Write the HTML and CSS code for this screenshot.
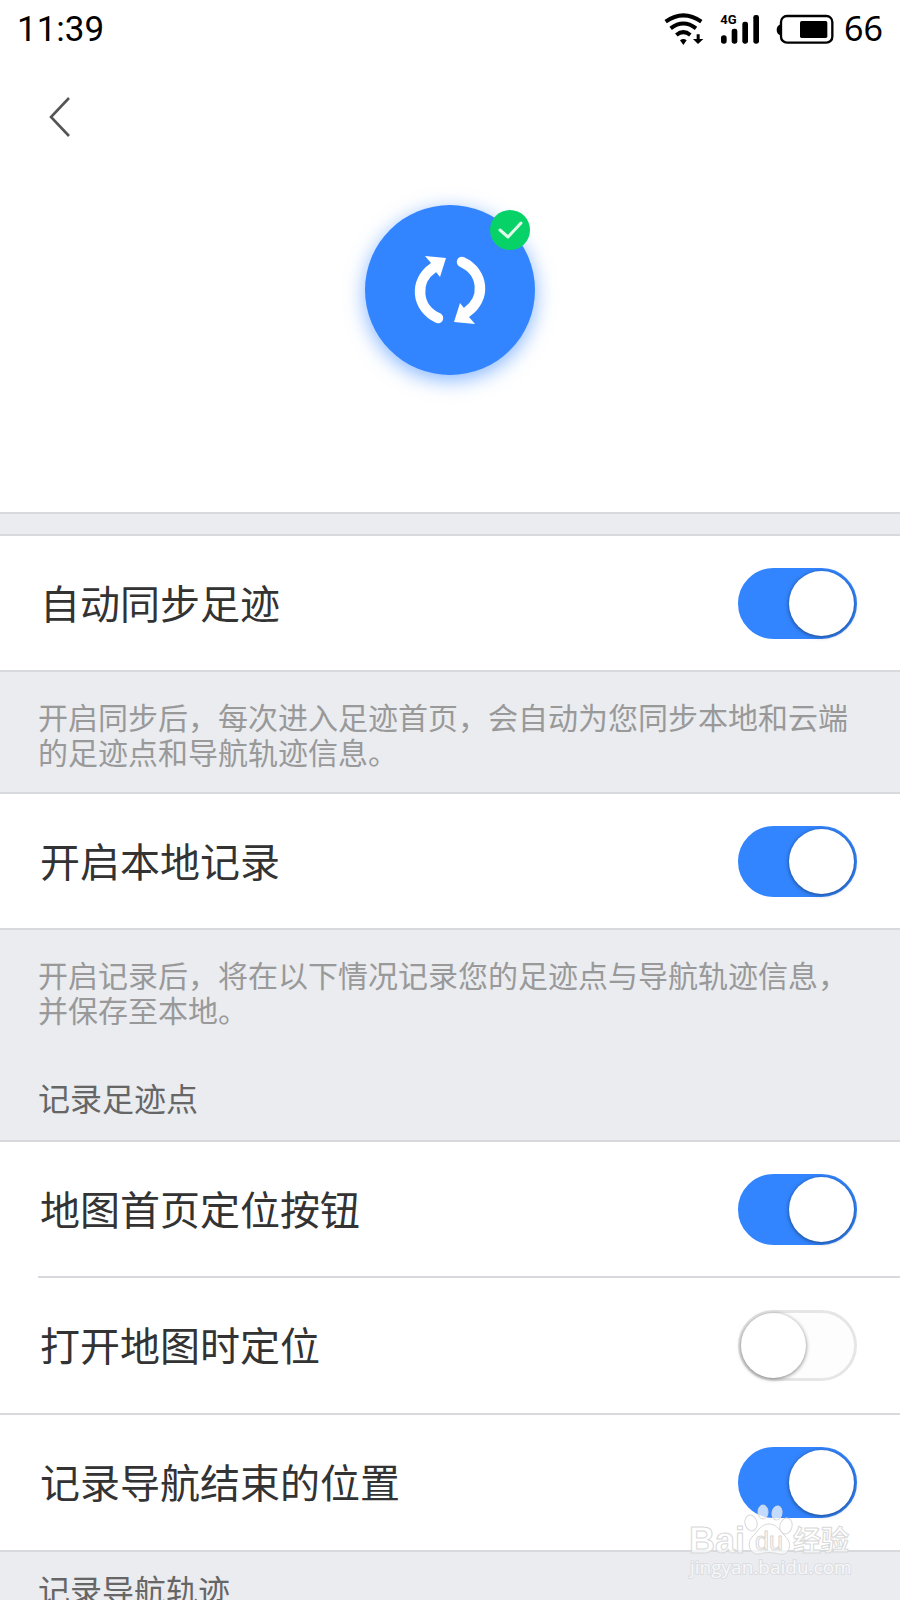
FILE: index.html
```html
<!DOCTYPE html>
<html lang="zh-CN">
<head>
    <meta charset="UTF-8">
    <meta name="viewport" content="width=device-width, initial-scale=1.0">
    <title>足迹设置</title>
    <link rel="stylesheet" href="styles.css">
</head>
<body>
    <!-- Status bar -->
    <div class="status-bar">
        <span class="time">11:39</span>
        <div class="status-icons">
            <svg width="40" height="33" viewBox="69 30 120 99">
                <g fill="none" stroke="#000" stroke-width="12">
                    <path d="M74 59Q127 21 181 59"/>
                    <path d="M89 79Q127 50 165 79"/>
                    <path d="M106 99Q127 82 148 99"/>
                </g>
                <path d="M117 115Q127 107 137 115L127 129Z"/>
                <path d="M167 97h9v14h11L171 126 156 111h11Z"/>
            </svg>
            <svg width="40" height="33" viewBox="240 30 120 99">
                <text class="network" x="241" y="67">4G</text>
                <rect x="243" y="100" width="17" height="25" rx="8"/>
                <rect x="275" y="80" width="17" height="45" rx="7"/>
                <rect x="307" y="59" width="17" height="66" rx="7"/>
                <rect x="340" y="39" width="17" height="86" rx="7"/>
            </svg>
            <div class="battery">
                <svg width="58" height="33" viewBox="408 30 174 99">
                    <rect x="423" y="42" width="154" height="80" rx="18" fill="none" stroke="#000" stroke-width="7"/>
                    <path d="M421 67Q410 72 410 84T421 100Z"/>
                    <rect x="480" y="57" width="82" height="51" rx="5"/>
                </svg>
                <span>66</span>
            </div>
        </div>
    </div>

    <!-- Back button -->
    <header class="nav">
        <button type="button" class="back" aria-label="返回">
            <svg width="22" height="40" viewBox="0 0 22 40">
                <path d="M20 1L2 20L20 39" fill="none" stroke="#555" stroke-width="2.6"/>
            </svg>
        </button>
    </header>

    <!-- Sync state -->
    <section class="sync">
        <button type="button" class="sync-button" aria-label="同步">
            <svg width="170" height="170" viewBox="0 0 170 170">
                <g id="arrow" fill="#fff">
                    <path d="M73 113C51 103 49 76 68 63" fill="none" stroke="#fff" stroke-width="10.5" stroke-linecap="round"/>
                    <path d="M60 51L81 53L75 72L71 67L62 65L66 58Z"/>
                </g>
                <use href="#arrow" transform="rotate(180 85 85)"/>
            </svg>
            <span class="badge">
                <svg width="40" height="40" viewBox="0 0 40 40">
                    <path d="M10 20L18 27L31 13" fill="none" stroke="#dffbe9" stroke-width="3" stroke-linecap="round" stroke-linejoin="round"/>
                </svg>
            </span>
        </button>
    </section>

    <!-- Settings -->
    <main>
        <div class="divider"></div>
        <div class="row">
            <label for="autoSync">自动同步足迹</label>
            <input type="checkbox" class="switch" id="autoSync" checked>
        </div>
        <div class="note">
            <p>开启同步后，每次进入足迹首页，会自动为您同步本地和云端的足迹点和导航轨迹信息。</p>
        </div>
        <div class="row">
            <label for="localRecord">开启本地记录</label>
            <input type="checkbox" class="switch" id="localRecord" checked>
        </div>
        <div class="note">
            <p>开启记录后，将在以下情况记录您的足迹点与导航轨迹信息，并保存至本地。</p>
            <h2>记录足迹点</h2>
        </div>
        <div class="row inset">
            <label for="homeLocate">地图首页定位按钮</label>
            <input type="checkbox" class="switch" id="homeLocate" checked>
        </div>
        <div class="row tall">
            <label for="openLocate">打开地图时定位</label>
            <input type="checkbox" class="switch" id="openLocate">
        </div>
        <div class="row tall">
            <label for="naviEnd">记录导航结束的位置</label>
            <input type="checkbox" class="switch" id="naviEnd" checked>
        </div>
        <div class="track">
            <h2>记录导航轨迹</h2>
        </div>
    </main>

    <!-- Watermark -->
    <svg class="watermark" width="170" height="86" viewBox="0 0 170 86">
        <g class="paw">
            <ellipse cx="67" cy="27" rx="6" ry="8" transform="rotate(-15 67 27)"/>
            <ellipse cx="79" cy="16" rx="5" ry="7"/>
            <ellipse cx="93" cy="17" rx="5" ry="7" transform="rotate(10 93 17)"/>
            <ellipse cx="102" cy="30" rx="6" ry="8" transform="rotate(15 102 30)"/>
            <path d="M85 28C77 28 74 35 69 40C62 46 65 59 75 58C82 56 88 56 95 58C106 60 109 47 101 40C96 35 93 28 85 28Z"/>
        </g>
        <text class="brand" x="5" y="57">Bai</text>
        <text class="du" x="71" y="54">du</text>
        <text class="jingyan" x="109" y="55">经验</text>
        <text class="domain" x="6" y="78">jingyan.baidu.com</text>
    </svg>
</body>
</html>
```

FILE: styles.css
```css
* {
    box-sizing: border-box;
}

body {
    margin: 0;
    height: 100vh;
    overflow: hidden;
    position: relative;
    background: #fff;
    color: #333;
    font-family: "Noto Sans CJK SC", sans-serif;
}

svg {
    display: block;
}

h2,
p {
    margin: 0;
    font-weight: normal;
}

/* Status bar */
.status-bar {
    display: flex;
    justify-content: space-between;
    align-items: center;
    height: 56px;
    padding: 0 17px;
    color: #000;
    font-family: Roboto, sans-serif;
    font-size: 35px;
    line-height: 40px;
}

.time {
    padding-top: 4px;
}

.status-icons {
    display: flex;
    align-items: center;
    gap: 16px;
}

.battery {
    display: flex;
    align-items: center;
    gap: 10px;
    font-family: "Noto Sans", sans-serif;
    font-size: 34px;
}

.network {
    font-family: Roboto, sans-serif;
    font-size: 39px;
    font-weight: bold;
}

/* Back button */
.nav {
    padding: 41px 49px 0;
}

button {
    padding: 0;
    border: 0;
    background: none;
    cursor: pointer;
}

.back {
    display: block;
}

/* Sync button */
.sync {
    display: flex;
    justify-content: center;
    padding: 68px 0 137px;
}

.sync-button {
    position: relative;
    border-radius: 50%;
    background: #3385ff;
    box-shadow: 0 5px 20px rgba(51, 133, 255, 0.6);
}

.badge {
    position: absolute;
    top: 5px;
    right: 5px;
    border-radius: 50%;
    background: #06d268;
}

/* Settings list */
.divider {
    height: 24px;
    background: #eaecf0;
    border-top: 2px solid #d8d9dc;
    border-bottom: 2px solid #d8d9dc;
}

.row {
    display: flex;
    justify-content: space-between;
    align-items: center;
    height: 136px;
    padding: 0 43px 0 40px;
    border-bottom: 2px solid #d8d9dc;
    font-size: 40px;
    line-height: 60px;
}

.row label {
    padding-bottom: 3px;
}

.tall {
    height: 137px;
}

.inset {
    margin-left: 38px;
    padding-left: 2px;
}

.note,
.track {
    padding: 27px 38px 23px;
    background: #eaecf0;
    color: #999;
    font-size: 30px;
    line-height: 35px;
}

.note {
    border-bottom: 2px solid #d8d9dc;
}

h2 {
    color: #666;
    font-size: 32px;
    line-height: 40px;
}

.note h2 {
    margin-top: 50px;
}

.track {
    padding-top: 17px;
}

/* Switch */
.switch {
    appearance: none;
    position: relative;
    width: 119px;
    height: 71px;
    margin: 0;
    border: 3px solid #e6e6e6;
    border-radius: 36px;
    background: #fdfdfd;
    cursor: pointer;
}

.switch::before {
    content: "";
    position: absolute;
    top: 0;
    left: 0;
    width: 65px;
    height: 65px;
    border-radius: 50%;
    background: #fff;
    box-shadow: 0 1px 4px rgba(0, 0, 0, 0.5);
}

.switch:checked {
    border-color: #3385ff;
    background: #3385ff;
}

.switch:checked::before {
    left: auto;
    right: 0;
}

/* Watermark over the bottom right corner */
.watermark {
    position: absolute;
    right: 46px;
    bottom: 18px;
    fill: rgba(255, 255, 255, 0.7);
    stroke: #d8d8d8;
    stroke-width: 1px;
}

.brand {
    font: bold 36px "Liberation Sans", sans-serif;
}

.du {
    font: 25px "Liberation Sans", sans-serif;
}

.jingyan {
    font: bold 28px "Noto Sans CJK SC", sans-serif;
}

.domain {
    font: 19px "Open Sans", sans-serif;
    fill: #f6f7f9;
    stroke: #dcdde0;
    stroke-width: 2px;
    paint-order: stroke;
}
```
